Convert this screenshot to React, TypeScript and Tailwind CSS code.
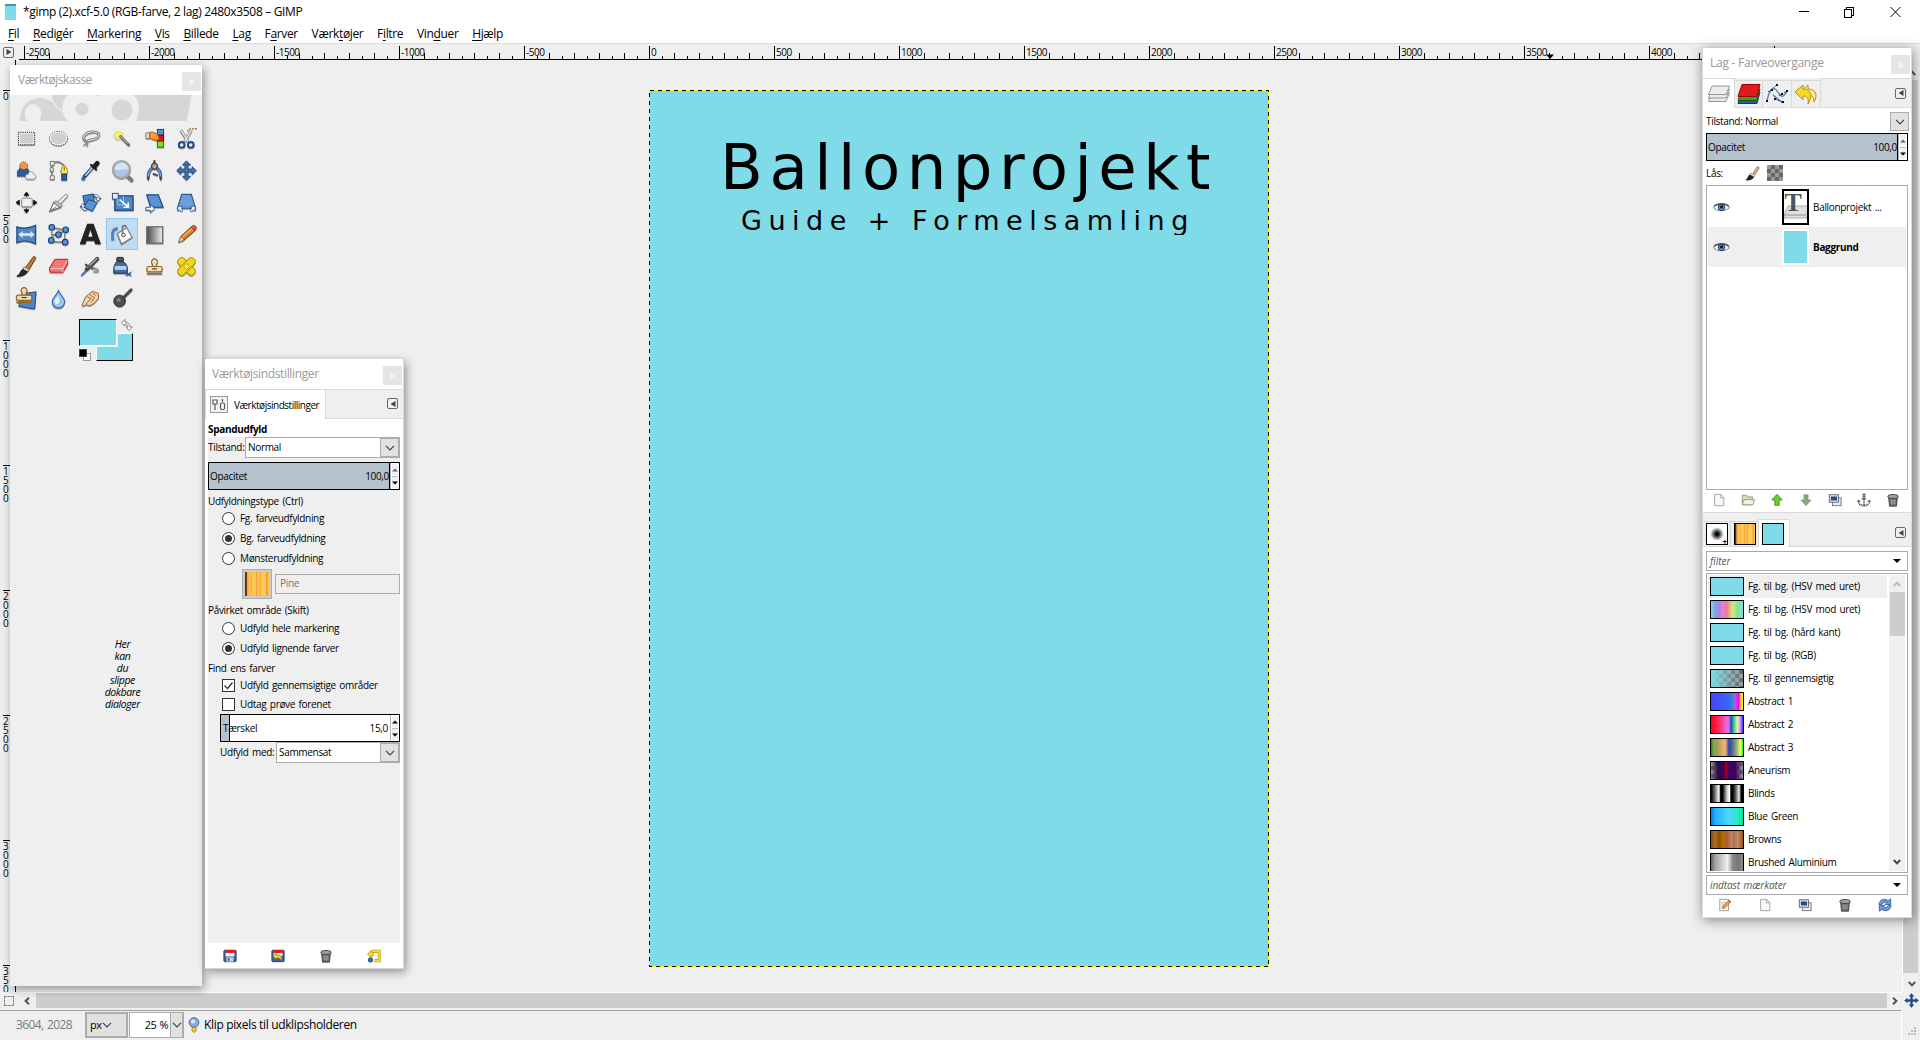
import React from "react";

type Kids = { children?: React.ReactNode };

const stroke = { fill: "none", strokeLinecap: "round", strokeLinejoin: "round" } as const;

/* ---------- tool icons, 24x24 ---------- */

const Stamp = () => (
  <g fill="#f0dcae" stroke="#8f6a2a" strokeWidth="1.2">
    <path d="M9.500 12.500c1.500-2 .5-2.500-.500-4.500a3.100 3.100 0 1 1 6 0c-1 2-2 2.500-.5 4.500z" />
    <rect x="4" y="12" width="16" height="5.500" rx="1.800" />
    <path d="M4 19.500h16" stroke="#8f6a2a" strokeWidth="1.500" />
    <path d="M9.500 14.500h5" stroke="#3a3a3a" />
  </g>
);

const tools: React.ReactNode[] = [
  <g>
    <rect x="4" y="6" width="16" height="12" fill="#cdd0cb" stroke="#fff" strokeWidth="1.4" />
    <rect x="3.500" y="5.500" width="17" height="13" fill="none" stroke="#111" strokeDasharray="1.200 1" />
  </g>,
  <g>
    <ellipse cx="12" cy="12" rx="9" ry="7" fill="#cdd0cb" stroke="#fff" strokeWidth="1.500" />
    <ellipse cx="12" cy="12" rx="9.500" ry="7.400" fill="none" stroke="#333" strokeDasharray="1.200 1.300" />
  </g>,
  <g {...stroke}>
    <path d="M6 14c-3-4 1-8.500 8-9 6-.3 8.500 3 5.500 6-2.500 2-7 2-10.500 3.500" stroke="#777" strokeWidth="2.800" />
    <path d="M6 14c-3-4 1-8.500 8-9 6-.3 8.500 3 5.500 6-2.500 2-7 2-10.500 3.500" stroke="#dcdcdc" strokeWidth="1.100" />
    <path d="M5 13l4 3-4 3M7 14c2 2 3 4 1 6" stroke="#8a8a8a" strokeWidth="1.300" />
  </g>,
  <g>
    <circle cx="8" cy="8" r="5.500" fill="#fdf6a0" opacity=".65" />
    <circle cx="8" cy="8" r="2.800" fill="#fff04e" />
    <path d="M10 10l8.500 8.500" stroke="#6b6b66" strokeWidth="3" strokeLinecap="round" />
    <path d="M10 9.500l8 8" stroke="#d5d5cb" strokeWidth="1" />
  </g>,
  <g>
    <rect x="15" y="2.500" width="6.500" height="6" fill="#5c8fcb" stroke="#1c3f75" />
    <rect x="15" y="8.500" width="6.500" height="6.500" fill="#d8140f" stroke="#6d0202" />
    <rect x="15" y="15" width="6.500" height="6" fill="#7fdc1b" stroke="#347a04" />
    <path d="M3 6h4v6H3z" fill="#d9d9d9" stroke="#888" />
    <path d="M7 5.500c3-1 6 1 8 2l2 5-4 1.500-6-2.500z" fill="#fb9b35" stroke="#c25b04" />
  </g>,
  <g>
    <path d="M6 3l7.500 12M17 3.500l-7 11.500" stroke="#8d8d8d" strokeWidth="3" />
    <path d="M6 3l7.500 12M17 3.500l-7 11.500" stroke="#e9e9e9" strokeWidth="1.300" />
    <path d="M13 4c1-3 3-2.500 10-2.500" fill="none" stroke="#b87a1a" strokeDasharray="2 1" />
    <ellipse cx="7" cy="18.500" rx="3" ry="3" fill="none" stroke="#204a87" strokeWidth="2" />
    <ellipse cx="16.500" cy="18.500" rx="3" ry="3" fill="none" stroke="#204a87" strokeWidth="2" />
  </g>,
  <g>
    <path d="M2.500 18v-5c1-3 4-4 7-4s5 1 5 4v5z" fill="#2c5aa0" stroke="#5a2a72" strokeDasharray="1.500 1" />
    <circle cx="9" cy="7" r="4" fill="#f39a3c" stroke="#8a4a10" strokeDasharray="1.500 1" />
    <path d="M11 19c0-3 2-3 3-3 0-4 5-4 5.500 0 4 1 2 5 0 5h-6c-1.500 0-2.500-.7-2.500-2z" fill="#efefef" stroke="#999" />
  </g>,
  <g>
    <path d="M5 5v14M5 4c8-3 12 1 13 4" fill="none" stroke="#7c7c7c" strokeWidth="1.500" />
    <path d="M3.500 2.500h4v4h-4zM3.500 17.500h4v4h-4zM3.500 9h3v4h-3z" fill="#f4f4f4" stroke="#777" />
    <path d="M18 6c3 3 4 6 3 9h-6c-1-3 0-6 3-9z" fill="#ffe868" stroke="#a88a06" />
    <path d="M18 8v4" stroke="#6b5a00" />
    <rect x="15.500" y="16" width="5" height="6" fill="#2c5f9e" stroke="#163a68" />
  </g>,
  <g {...stroke}>
    <path d="M5.500 18.500L14 9" stroke="#214c86" strokeWidth="3.600" />
    <path d="M7 17l7-8" stroke="#b9d4ee" strokeWidth="1.600" />
    <path d="M12.500 6l5.500 5" stroke="#1c1c1c" strokeWidth="2.200" />
    <path d="M16 8l3-3.500" stroke="#1c1c1c" strokeWidth="5" />
    <circle cx="4.500" cy="20.500" r="2" fill="#2f68b0" stroke="none" />
  </g>,
  <g>
    <path d="M16 17l5.500 5" stroke="#7b7b7b" strokeWidth="4" strokeLinecap="round" />
    <circle cx="11" cy="11" r="8.900" fill="#a9c6e8" stroke="#a4a6a3" strokeWidth="2.200" />
    <path d="M4 11a7 7 0 0 1 14 0c-4-1.500-9 2-14 0z" fill="#d5e5f5" />
  </g>,
  <g {...stroke}>
    <path d="M12 2v3" stroke="#333" strokeWidth="2" />
    <path d="M10 9c-3 2-4.500 6-4.500 10M14 9c3 2 4.500 6 4.500 10" stroke="#3465a4" strokeWidth="3.200" />
    <path d="M10 9c-3 2-4.500 6-4.500 10M14 9c3 2 4.500 6 4.500 10" stroke="#9dbfe4" strokeWidth="1" />
    <circle cx="12" cy="7.500" r="3" fill="#aaa" stroke="#444" strokeWidth="1.400" />
    <path d="M5.500 19v2.500M18.500 19v2.500M11 15.500l4 1.500" stroke="#444" strokeWidth="1.800" />
  </g>,
  <path d="M12 2l4 4h-2.500v4.500H18V8l4 4-4 4v-2.500h-4.500V18H16l-4 4-4-4h2.500v-4.500H6V16l-4-4 4-4v2.500h4.500V6H8z" fill="#3d74b8" stroke="#1b437c" />,
  <g>
    <rect x="7" y="7.500" width="11" height="9" rx="1.500" fill="#f1f1f1" stroke="#888" />
    <path d="M12 1l2.500 3.500h-5zM12 23l2.500-3.500h-5zM1 12l3.500-2.500v5zM23 12l-3.500-2.500v5zM12 2v4M12 18v4M2 12h3M19 12h4" fill="#111" stroke="#111" strokeWidth=".8" />
  </g>,
  <g>
    <path d="M8 14L20 3l2 2-10 11z" fill="#e9ebe8" stroke="#868884" />
    <path d="M3 21l4-9 7 5z" fill="#fafafa" stroke="#6d6d6d" strokeWidth="1.200" />
    <path d="M3 21l7-5M7 12l7 5 2-2-7-5z" fill="#c9cbc8" stroke="#777" />
  </g>,
  <g>
    <path d="M4 5l11-2 1 9-10 2z" fill="#4a83c4" stroke="#1d4781" />
    <path d="M10 9l9 3-5 9-9-4z" fill="#5a92d2" stroke="#1d4781" />
    <path d="M16 4c3-1 5 1 5 4l2-1-3 4-3-4 2 .5c0-1-1-2-3-1.500zM8 20c-3 1-5-1-5-4l-2 1 3-4 3 4-2-.5c0 1 1 2 3 1.500z" fill="#fff" stroke="#1d4781" strokeWidth=".8" />
  </g>,
  <g>
    <rect x="4" y="5" width="19" height="15" fill="#4f86c6" stroke="#1d4781" strokeWidth="1.300" />
    <path d="M1.500 2.500h6v6h-6z" fill="#e4eefa" stroke="#1d4781" />
    <path d="M7 8.500v6h6v-9" fill="none" stroke="#dbe8f7" strokeDasharray="1.500 1" />
    <path d="M9 9l9 7.500M18 12v5h-5" fill="none" stroke="#fff" strokeWidth="1.700" />
  </g>,
  <g>
    <path d="M4 4h12l5 13H8z" fill="#5a92d2" stroke="#1d4781" strokeWidth="1.200" />
    <path d="M3 17h5v-2.500l4.500 4-4.500 4V20H3z" fill="#fff" stroke="#2d5c99" />
  </g>,
  <g>
    <path d="M7 3.500h10L21.500 18h-19z" fill="#6c9fd8" stroke="#2a5a98" strokeWidth="1.200" />
    <path d="M3 16h5l-1.500 1.500L8 20l-1.500 1.500L4.500 19.500 3 21zM21 16h-5l1.500 1.500L16 20l1.500 1.500 2-2L21 21z" fill="#fff" stroke="#2a5a98" strokeWidth=".9" />
  </g>,
  <g>
    <path d="M2 4c6 2 13 1.500 19.500-1.500v19C15 18.500 8 18 2 20.500z" fill="#4d85c5" stroke="#1d4781" strokeWidth="1.200" />
    <path d="M3.500 12L8 8v2.500h8V8l4.500 4-4.500 4v-2.500H8V16z" fill="#dce9f7" stroke="#7da6d4" strokeWidth=".6" />
  </g>,
  <g>
    <path d="M5 4.500l14 3-1 12H5l1-7 6-1M5 4.500V13M12 12l6-4" fill="none" stroke="#8b8b8b" strokeWidth="1.500" />
    <g fill="#5a92d2" stroke="#173e76" strokeWidth="1.100">
      <circle cx="5" cy="4.500" r="2.900" /><circle cx="19.500" cy="7" r="2.900" /><circle cx="12" cy="12" r="2.900" />
      <circle cx="4.500" cy="18" r="2.900" /><circle cx="19" cy="20" r="2.900" />
    </g>
  </g>,
  <text x="12" y="22" textAnchor="middle" fontFamily="DejaVu Sans" fontWeight="bold" fontSize="28" fill="#222" stroke="#222" strokeWidth=".6">A</text>,
  <g>
    <path d="M2 18c-1-8 0-13 5-12" fill="none" stroke="#5a82b8" strokeWidth="3" />
    <path d="M6.500 11l10-6 5.500 10-11 7z" fill="#fbfbfb" stroke="#7d7d7d" strokeWidth="1.200" />
    <path d="M12 12V4c0-2 4-2 4 0" fill="none" stroke="#777" strokeWidth="1.500" />
    <circle cx="13" cy="12.500" r="1.900" fill="#ddd" stroke="#555" />
  </g>,
  <g>
    <defs><linearGradient id="tg"><stop stopColor="#4a4a4a" /><stop offset="1" stopColor="#f0f0f0" /></linearGradient></defs>
    <rect x="4" y="4" width="16.500" height="17" fill="url(#tg)" stroke="#6d6d6d" strokeWidth="1.400" />
  </g>,
  <g>
    <path d="M4 20l2-6L17 4l4 3.500L9 18z" fill="#d9892f" stroke="#7b4208" />
    <path d="M17 4l1.500-1.200c2-1 4.500 1 3.500 3L21 7.500z" fill="#e35b5b" stroke="#a02929" />
    <path d="M4 20l2-6 3.500 4z" fill="#f3dfb4" stroke="#7b6a3a" strokeWidth=".8" />
    <path d="M8 14.500L18 5.500" stroke="#f5c078" />
  </g>,
  <g>
    <path d="M11 13L19 2c1.500-1 3 0 2.500 1.500L14 16z" fill="#c77a32" stroke="#6e3b0d" />
    <path d="M9.500 12.500l5 3-1.500 2-5-2.500z" fill="#e8e8e8" stroke="#777" />
    <path d="M2 22c4-1 2-4 6-7l5 2.500C11 21 6 22.500 2 22z" fill="#2a2a2a" stroke="#111" />
  </g>,
  <g strokeLinejoin="round">
    <path d="M2.500 14l6-9.500h13v5l-5 8.500H3.500z" fill="#f17878" stroke="#d22c2c" strokeWidth="1.200" />
    <path d="M3.500 14h13l5-8.500M16.500 14v4" fill="none" stroke="#ffc3c3" strokeWidth="1" />
  </g>,
  <g {...stroke}>
    <path d="M12 12l7 3c3 2-1 3-3 2" stroke="#9a9a9a" strokeWidth="2" />
    <path d="M8 15L19 4" stroke="#444" strokeWidth="4.200" />
    <path d="M9 13L19 3.500" stroke="#bdbdbd" strokeWidth="1.200" />
    <path d="M7 10l7 4" stroke="#555" strokeWidth="2" />
    <path d="M3 21l4-4" stroke="#3f76bd" strokeWidth="2.200" />
  </g>,
  <g>
    <rect x="6" y="2.500" width="7" height="4" rx="1" fill="#555" stroke="#222" />
    <path d="M6 7h7c4 3 4 5 4 12H3c0-7 0-9 3-12z" fill="#506a8e" stroke="#1c2b42" />
    <rect x="3.500" y="11" width="13" height="5" fill="#b6d0ee" stroke="#3d6ba5" />
    <path d="M15 17l3 2 4-2-2 3 2 2-4-1-3 1 1-2z" fill="#2f5f9f" />
  </g>,
  <Stamp />,
  <g fill="#f2d61c" stroke="#b59a06">
    <rect x="1" y="8" width="22" height="8" rx="3.500" transform="rotate(45 12 12)" />
    <rect x="1" y="8" width="22" height="8" rx="3.500" transform="rotate(-45 12 12)" />
    <path d="M9 12l3-3 3 3-3 3z" fill="#fbec7a" />
  </g>,
  <g>
    <path d="M8 7l14-2-1.500 18L4 20z" fill="#4e86c6" stroke="#1d4781" />
    <g transform="translate(-2.500 -3.500)"><Stamp /></g>
  </g>,
  <g>
    <path d="M12 4c2 5 6.500 7 6.500 11.500a6.500 6.500 0 0 1-13 0C5.500 11 10 9 12 4z" fill="#9cc3ec" stroke="#3668a8" strokeWidth="1.200" />
    <path d="M8 15c0-3 3-4 4-7 0 5 3 6-1 10-2 0-3-1-3-3z" fill="#e3f0fc" />
  </g>,
  <g>
    <path d="M3 19l4-9 7-5.500 6 2 .5 5-4 5-5 3-4-1-3 1.500z" fill="#f2cfae" stroke="#9d633a" />
    <path d="M8 10l5 2-6 6M11 8l5 3-3 5M14 6l4 3" fill="none" stroke="#9d633a" />
  </g>,
  <g>
    <path d="M12 12L21 3" stroke="#4a4d4c" strokeWidth="3" strokeLinecap="round" />
    <circle cx="9" cy="14.500" r="6" fill="#4b4e4d" stroke="#2b2d2c" />
    <circle cx="8" cy="13.500" r="2" fill="#808382" />
  </g>,
];

/* ---------- small 16x16 icons ---------- */

type IconName =
  | "page" | "folder" | "up" | "down" | "dup" | "anchor" | "trash" | "edit" | "reload" | "save" | "restore" | "reset" | "brush" | "eye" | "move";

const small: Record<IconName, React.ReactNode> = {
  page: <path d="M3 1.500h6.500L13.500 5V14.500H3zM9.500 1.500v4h4" fill="#fafafa" stroke="#9a9c98" />,
  folder: (
    <g stroke="#8f9a78">
      <path d="M1.500 13.500v-11h5l1 2H13v9z" fill="#d5dcc0" />
      <path d="M1.500 13.500l2-6h12l-2 6z" fill="#eef0e0" />
    </g>
  ),
  up: <path d="M8 1.500l6 6.500H10.500v6h-5V8H2z" fill="#6fd02a" stroke="#3d8a10" />,
  down: <path d="M8 14.500l6-6.500H10.500V2h-5v6H2z" fill="#86a878" stroke="#6d8a62" strokeDasharray="1 1" />,
  dup: (
    <g>
      <rect x="5" y="5.500" width="10" height="9" fill="#e8e8e8" stroke="#66707c" />
      <rect x="1.500" y="2" width="10.500" height="8.500" fill="#dfe3e8" stroke="#56616e" />
      <rect x="3.300" y="4" width="7" height="4.500" fill="#2b4a7a" />
    </g>
  ),
  anchor: <path d="M8 1.500a1.300 1.300 0 1 1 0 2.600 1.300 1.300 0 0 1 0-2.600zM8 4.500v10M5.500 6.500h5M1 8.500C2 13 5 14.500 8 14.500s6-1.500 7-6M1 8.500l3 1M15 8.500l-3 1" fill="none" stroke="#555" strokeWidth="1.800" strokeDasharray="1.500 .5" />,
  trash: (
    <g stroke="#3a3c3a">
      <path d="M3 4.500h10l-1 10.500H4z" fill="#6d706e" />
      <ellipse cx="8" cy="4" rx="6" ry="2.300" fill="#9b9e9b" />
      <path d="M6 7.500v5M8 7.500v5.500M10 7.500v5" stroke="#b5b8b5" strokeWidth=".8" />
    </g>
  ),
  edit: (
    <g>
      <path d="M2 1.500h10v13H2z" fill="#f5f5f5" stroke="#999" />
      <path d="M4 5h5M4 7h4M4 9h3" stroke="#bbb" />
      <path d="M5 12l1-3 6-6 2 2-6 6z" fill="#f0a33a" stroke="#9a5a10" strokeWidth=".8" />
      <path d="M11.500 3.500l1.500-1.200 1.800 1.800L13.500 5.500z" fill="#e03c3c" />
    </g>
  ),
  reload: (
    <g fill="#6f9bd0" stroke="#2a5596" strokeWidth=".9">
      <path d="M1 7.500C1.500 1.500 8 0 11.500 3L14.500 1v6.500H8l2.200-2.200C8 4 5.500 5 4.500 7.500z" />
      <path d="M15 8.500C14.500 14.500 8 16 4.500 13L1.500 15V8.500H8l-2.200 2.200C8 12 10.500 11 11.500 8.500z" />
    </g>
  ),
  save: (
    <g>
      <rect x="1" y="1.500" width="14" height="13" rx="1" fill="#3a64a0" stroke="#1f3f70" />
      <rect x="3" y="2" width="10" height="6.500" fill="#f5f5f5" />
      <rect x="2.500" y="1" width="11" height="3.500" fill="#e01b1b" />
      <rect x="4" y="9.500" width="8" height="5" fill="#d0d4d8" />
      <rect x="5.500" y="10.500" width="2" height="3" fill="#44546a" />
    </g>
  ),
  restore: (
    <g>
      <rect x="1" y="1.500" width="14" height="13" rx="1" fill="#3a64a0" stroke="#1f3f70" />
      <rect x="3" y="2" width="10" height="6" fill="#f5f5f5" />
      <rect x="2.500" y="1" width="11" height="3.500" fill="#e01b1b" />
      <path d="M2 8l4-3.500V7c5-.5 7 2 6 6.500-1.500-3-3-3.500-6-3.200V12z" fill="#f5d732" stroke="#8a7206" strokeWidth=".8" />
    </g>
  ),
  reset: (
    <g>
      <path d="M5.500 2.500h8.500v11H8.500" fill="none" stroke="#b39206" strokeWidth="3.400" />
      <path d="M4.500 2.500h9.500v11H8.500" fill="none" stroke="#f9dc3a" strokeWidth="2" />
      <path d="M.5 6l4-4.500L8 7H6v2H3V7z" fill="#f9dc3a" stroke="#b39206" strokeWidth=".8" />
      <circle cx="4" cy="12.500" r="2.500" fill="#3c6fb4" stroke="#1d4781" />
    </g>
  ),
  brush: (
    <g>
      <path d="M9 8l4-6c1-.8 2.500.2 2 1.500L11 9.500z" fill="#e0b98a" stroke="#8a5a2a" strokeWidth=".7" />
      <path d="M7 8l4 2.500-1 1.500-4-2.500z" fill="#e8e8e8" stroke="#777" strokeWidth=".6" />
      <path d="M1 15c3-1 2-3 4.500-5.500L10 12c-1 3-6 4-9 3z" fill="#222" />
    </g>
  ),
  eye: (
    <g>
      <path d="M.5 8C3 4.500 12 3.500 15.500 8 12 12 3 12 .5 8z" fill="#fff" stroke="#8a8d8a" />
      <path d="M1 6.800C4 3.800 12 3.500 15 7" fill="none" stroke="#555" strokeWidth="1.200" />
      <circle cx="8" cy="7.800" r="3" fill="#5f86b8" stroke="#2f4d78" />
      <circle cx="8" cy="7.600" r="1.400" fill="#0d1624" />
    </g>
  ),
  move: <path d="M8 .5l2.500 3H9v3.500h3.500V5.500l3 2.500-3 2.500V9H9v3.500h1.500L8 15.500l-2.500-3H7V9H3.500v1.500L.5 8l3-2.500V7H7V3.500H5.500z" fill="#204a87" stroke="#204a87" strokeWidth=".5" />,
};

const Icon = ({ n, className = "size-4" }: { n: IconName; className?: string }) => (
  <svg viewBox="0 0 16 16" className={`shrink-0 ${className}`}>{small[n]}</svg>
);

/* ---------- shared widgets ---------- */

const Chevron = ({ className }: { className: string }) => (
  <svg viewBox="0 0 10 6" className={className}><path d="M1 .8l4 4 4-4" fill="none" stroke="currentColor" strokeWidth="1.200" /></svg>
);

/* Bold arrow head used at the ends of scroll bars */
const ScrollArrow = ({ className }: { className: string }) => (
  <svg viewBox="0 0 8 6" className={`h-[6px] w-2 ${className}`}><path d="M.8 1L4 4.400 7.200 1" fill="none" stroke="currentColor" strokeWidth="2" /></svg>
);

const TitleBar = ({ children, className }: Kids & { className: string }) => (
  <div className="flex h-[30px] shrink-0 items-center justify-between bg-white pr-px text-[12px] text-[#999]">
    <span className={className}>{children}</span>
    <span className="mt-[3px] flex size-[19px] items-center justify-center bg-[#e5e5e5] pb-px text-[10px] font-bold text-[#f7f7f7]">x</span>
  </div>
);

const MenuButton = () => (
  <span className="flex h-[11px] w-[11px] items-center justify-center rounded-[2px] border border-[#666]">
    <svg viewBox="0 0 6 6" className="size-[6px]"><path d="M5.500 0v6L.5 3z" fill="#444" /></svg>
  </span>
);

const Spinner = ({ dim = false }: { dim?: boolean }) => (
  <span className="flex w-[9px] flex-col border-l border-[#b5b5b5] bg-white p-px">
    <span className={`flex flex-1 items-center justify-center bg-[#f0f0f0] ${dim ? "text-[#666]" : "text-black"}`}>
      <svg viewBox="0 0 6 4" className="h-1 w-[6px]"><path d="M0 3.500h6L3 .5z" fill="currentColor" /></svg>
    </span>
    <span className="mt-px flex flex-1 items-center justify-center border-t border-[#bbb] bg-[#f0f0f0]">
      <svg viewBox="0 0 6 4" className="h-1 w-[6px]"><path d="M0 .5h6L3 3.500z" /></svg>
    </span>
  </span>
);

const OpacitySlider = () => (
  <div className="flex h-7 border border-black">
    <div className="flex flex-1 items-center justify-between border-r border-black bg-[#b4c2ce] pl-px">
      <span>Opacitet</span><span>100,0</span>
    </div>
    <Spinner dim />
  </div>
);

const Combo = ({ children }: Kids) => (
  <span className="flex flex-1 items-center border border-[#acacac] bg-white pl-[2px]">
    <span className="flex-1">{children}</span>
    <span className="flex w-[19px] items-center justify-center self-stretch border border-[#acacac] bg-[#e1e1e1] text-[#444]"><Chevron className="h-[6px] w-[10px]" /></span>
  </span>
);

const Radio = ({ on = false, children, className = "" }: Kids & { on?: boolean; className?: string }) => (
  <div className={`ml-[14px] flex items-center gap-[5px] ${className}`}>
    <span className="flex size-[13px] items-center justify-center rounded-full border border-[#333] bg-white">
      {on && <span className="size-[7px] rounded-full bg-[#333]" />}
    </span>
    <span>{children}</span>
  </div>
);

const Check = ({ on = false, children, className = "" }: Kids & { on?: boolean; className?: string }) => (
  <div className={`ml-[14px] flex items-center gap-[5px] ${className}`}>
    <span className="flex size-[13px] items-center justify-center border border-[#333] bg-white">
      {on && <svg viewBox="0 0 11 11" className="size-[11px]"><path d="M1.500 5.500l3 3 5-6" fill="none" stroke="#333" strokeWidth="1.200" /></svg>}
    </span>
    <span>{children}</span>
  </div>
);

const pine = "bg-[linear-gradient(90deg,#5a2d12_0,#5a2d12_6%,#f0a040_8%,#ffc64e_20%,#f9ac45_26%,#ffca55_32%,#ffc64e_44%,#f5a33c_48%,#ffcb58_54%,#f9a843_62%,#ffc850_70%,#ffcd60_84%,#f0a040_90%,#ffc64e_100%)]";
const checker = "bg-[repeating-conic-gradient(#666_0_25%,#999_0_50%)] bg-[length:8px_8px]";

/* ---------- main window ---------- */

const menus: [string, string, string][] = [
  ["", "F", "il"], ["", "R", "edigér"], ["", "M", "arkering"], ["", "V", "is"], ["", "B", "illede"], ["", "L", "ag"],
  ["F", "a", "rver"], ["Værk", "t", "øjer"], ["F", "i", "ltre"], ["Vin", "d", "uer"], ["", "H", "jælp"],
];

const hLabels = ["-2500", "-2000", "-1500", "-1000", "-500", "0", "500", "1000", "1500", "2000", "2500", "3000", "3500", "4000", "4500"];
const vLabels = ["0", "500", "1000", "1500", "2000", "2500", "3000", "350"];

const Ticks = () => (
  <svg className="absolute bottom-0 left-0 h-[13px] w-[125px]" shapeRendering="crispEdges">
    <path d="M.5 0v13M25.500 7v6M50.500 7v6M75.500 7v6M100.500 7v6M13.500 10v3M38.500 10v3M63.500 10v3M88.500 10v3M113.500 10v3" stroke="#000" />
  </svg>
);

const MainWindow = () => (
  <div className="flex h-[1040px] w-[1920px] flex-col">
    <div className="flex h-[22px] items-center bg-white pt-0.5 pl-[5px]">
      <span className="h-4 w-[11px] border-t-2 border-[#4b98a3] bg-[#7edbe7]" />
      <span className="ml-[7px] text-[12px] tracking-[-0.33px]">*gimp (2).xcf-5.0 (RGB-farve, 2 lag) 2480x3508 – GIMP</span>
      <svg viewBox="0 0 102 12" className="mr-[19px] ml-auto h-3 w-[102px]" shapeRendering="crispEdges" fill="none" stroke="#000">
        <path d="M0 5.500h10M45.500 3.500h7v8h-7zM47.500 3v-1.500h7v8h-2" />
        <path d="M91.500 1l10 10M101.500 1l-10 10" shapeRendering="auto" />
      </svg>
    </div>
    <div className="flex h-[22px] items-center gap-[13.700px] border-b border-[#dcdcdc] bg-white pt-0.5 pl-2 text-[12px] tracking-[-0.34px]">
      {menus.map(([a, u, b]) => (
        <span key={a + u + b}>{a}<span className="underline underline-offset-2">{u}</span>{b}</span>
      ))}
    </div>

    <div className="flex h-4 shrink-0">
      <div className="flex w-[19px] items-center pl-[3px]">
        <span className="flex h-[11px] w-[11px] items-center justify-center rounded-[2px] border border-[#666]">
          <svg viewBox="0 0 6 6" className="size-[6px]"><path d="M.5 0v6L5.500 3z" fill="#444" /></svg>
        </span>
      </div>
      <div className="relative flex w-[1883px] overflow-hidden border-b border-black pl-[5px]">
        {hLabels.map((l) => (
          <div key={l} className="relative h-[15px] w-[125px] shrink-0">
            <Ticks />
            <span className="block pt-[2px] pl-[2px] text-[10px] leading-[13px] tracking-[-0.5px]">{l}</span>
          </div>
        ))}
        <svg viewBox="0 0 8 5" className="absolute bottom-0 left-[1527px] h-[5px] w-2"><path d="M0 .5h8L4 5z" /></svg>
      </div>
      <div className="flex-1" />
    </div>

    <div className="flex min-h-0 flex-1">
      <div className="flex w-4 shrink-0 flex-col overflow-hidden border-r border-black pt-[30px] pl-[3px]">
        {vLabels.map((l) => (
          <div key={l} className="flex h-[125px] shrink-0 flex-col border-t border-black pt-px text-[10px] leading-[9px]">
            {l.split("").map((c, i) => <span key={i}>{c}</span>)}
          </div>
        ))}
      </div>
      <div className="flex-1 pt-[30px] pl-[633px]">
        <div className="relative flex h-[877px] w-[620px] flex-col bg-[#7edbe7] font-['DejaVu_Sans'] text-black">
          <svg className="absolute inset-0 h-[877px] w-[620px]" fill="none" shapeRendering="crispEdges">
            <rect x=".5" y=".5" width="619" height="876" stroke="#ff0" />
            <rect x=".5" y=".5" width="619" height="876" stroke="#000" strokeDasharray="4 4" />
          </svg>
          <div className="mt-[41px] pl-[71px] text-[62.500px] leading-[74px] tracking-[6.500px]">Ballonprojekt</div>
          <div className="h-[30px] overflow-hidden pl-[92px] text-[27px] leading-[32px] tracking-[6.500px] whitespace-pre">Guide + Formelsamling</div>
        </div>
      </div>
      <div className="flex w-[18px] flex-col items-center border-l border-white text-[#555]">
        <ScrollArrow className="mt-[10px] rotate-180" />
        <div className="mt-1 h-[893px] w-[15px] self-start bg-[#cdcdcd]" />
        <ScrollArrow className="mt-2" />
      </div>
    </div>

    <div className="flex h-[18px] shrink-0 text-[#555]">
      <span className="mt-[4px] ml-1 size-[10px] border border-dashed border-[#888]" />
      <div className="ml-[5px] flex flex-1 items-center border-t border-white pb-[2px]">
        <ScrollArrow className="mr-[5px] ml-1 rotate-90" />
        <div className="h-[15px] flex-1 bg-[#cdcdcd]" />
        <ScrollArrow className="mx-1 -rotate-90" />
      </div>
      <Icon n="move" className="mt-[1px] mr-px ml-px size-[15px]" />
    </div>

    <div className="flex h-[30px] shrink-0">
      <div className="flex w-[1902px] items-center border-t border-r border-t-[#a0a0a0] border-r-white pb-px pl-[16px] text-[12px]">
        <span className="w-[69px] tracking-[-0.62px] text-[#7a7a7a] [word-spacing:1px]">3604, 2028</span>
        <span className="flex h-[26px] w-[43px] items-center border-2 border-[#acacac] bg-[#e1e1e1] pl-[3px] text-[11px] tracking-[-0.5px]">px<Chevron className="h-[6px] w-[10px] text-[#444]" /></span>
        <span className="ml-px flex h-[26px] w-[55px] border border-[#acacac] bg-white">
          <span className="flex flex-1 items-center justify-end pr-[2px] text-[11px] tracking-[-0.6px] [word-spacing:1px]">25 %</span>
          <span className="flex w-[13px] items-center justify-center border-x border-[#acacac] bg-[#e1e1e1] text-[#444]"><Chevron className="h-[6px] w-[10px]" /></span>
        </span>
        <svg viewBox="0 0 12 16" className="ml-1 h-4 w-3">
          <circle cx="6" cy="5.500" r="4.800" fill="#86addb" stroke="#3d68a3" />
          <circle cx="5" cy="4.500" r="2" fill="#dcebfa" />
          <path d="M4 10.500h4V14l-2 1.500L4 14z" fill="#f4cf30" stroke="#9a7d0a" strokeWidth=".7" />
        </svg>
        <span className="ml-[4px] tracking-[-0.34px]">Klip pixels til udklipsholderen</span>
      </div>
      <svg viewBox="0 0 9 9" className="mt-[17px] ml-[6px] size-[9px]" fill="#bbb">
        <path d="M6 0h2v2H6zM3 3h2v2H3zM6 3h2v2H6zM0 6h2v2H0zM3 6h2v2H3zM6 6h2v2H6z" />
      </svg>
    </div>
  </div>
);

/* ---------- floating windows ---------- */

const Toolbox = () => (
  <div className="absolute top-[65px] left-[10px] flex h-[921px] w-[192px] flex-col bg-[#efefef] shadow-[2px_3px_9px_rgba(0,0,0,0.4)]">
    <TitleBar className="pl-2 tracking-[-0.48px]">Værktøjskasse</TitleBar>
    <svg viewBox="0 0 192 26" className="h-[26px] w-[192px] shrink-0">
      <path d="M41 0h140q-1 14-5 26H46z" fill="#d6d6d6" />
      <path d="M10 26C10 10 20 3 30 3c9 0 16 6 22 14v9z" fill="#d6d6d6" />
      <path d="M41 0q1 10 12 17" fill="none" stroke="#efefef" strokeWidth="1.200" />
      <g fill="#efefef">
        <ellipse cx="23" cy="19" rx="8.300" ry="10" />
        <circle cx="72" cy="13" r="19.500" /><circle cx="107" cy="14" r="22" />
      </g>
      <circle cx="72" cy="14" r="6.500" fill="#d6d6d6" /><circle cx="112" cy="15" r="10.500" fill="#d6d6d6" />
    </svg>
    <div className="mt-px grid grid-cols-[repeat(6,32px)]">
      {tools.map((t, i) => (
        <div key={i} className={`flex size-8 items-center justify-center border ${i === 21 ? "border-[#90c8f6] bg-[#c0dcf3]" : "border-transparent"}`}>
          <svg viewBox="0 0 24 24" className="size-[23px] drop-shadow-[0_1px_0.5px_rgba(0,0,0,0.35)]">{t}</svg>
        </div>
      ))}
    </div>
    <div className="relative mt-[5px] ml-[69px] h-[42px] w-[54px]">
      <span className="absolute right-0 bottom-0 h-[28px] w-[37px] border border-t-white border-r-black border-b-black border-l-white bg-[#7edbe7]" />
      <span className="absolute top-0 left-0 h-[27px] w-[38px] border border-t-black border-r-white border-b-white border-l-black bg-[#7edbe7] outline-1 outline-[#efefef]" />
      <span className="absolute bottom-0 left-1 size-2 border border-[#999] bg-white" />
      <span className="absolute bottom-1 left-0 size-[8px] border border-[#444] bg-black" />
      <svg viewBox="0 0 12 12" className="absolute top-0 right-0 size-3" fill="#fff" stroke="#777" strokeWidth=".9"><path d="M.5 4L4 .5V3c3 0 5 2 5 5h2.500L8 11.500 5 8h2c0-2-1-3-3-3v2z" /></svg>
    </div>
    <p className="mt-[277px] ml-[33px] text-center text-[10.500px] leading-[12px] tracking-[-0.4px] italic">Her<br />kan<br />du<br />slippe<br />dokbare<br />dialoger</p>
  </div>
);

const ToolOptions = () => (
  <div className="absolute top-[359px] left-[205px] flex h-[610px] w-[199px] flex-col border-r border-b border-[#d8d8d8] bg-white text-[10px] tracking-[-0.32px] [word-spacing:1.200px] shadow-[2px_3px_9px_rgba(0,0,0,0.4)]">
    <TitleBar className="pl-[7px] tracking-[-0.36px]">Værktøjsindstillinger</TitleBar>
    <div className="flex h-[30px] shrink-0 bg-[#efefef]">
      <div className="flex w-[121px] items-center border-t border-r border-l border-[#d9d9d9] bg-white pl-1">
        <span className="flex h-[17px] w-[18px] shrink-0 items-center justify-center border border-[#999] bg-[#f2f2f2]">
          <svg viewBox="0 0 14 12" className="h-3 w-[14px]" fill="#fff" stroke="#555" strokeWidth="1.200"><path d="M1 1h4v4H1zM3 5v6M2.500 8h1" /><path d="M10.500 0v3" /><rect x="8.500" y="4" width="4" height="6.500" rx="1.500" /></svg>
        </span>
        <span className="mt-px ml-[6px] tracking-[-0.48px]">Værktøjsindstillinger</span>
      </div>
      <div className="flex flex-1 items-center justify-end border-y border-[#d9d9d9] pr-[5px] pb-px"><MenuButton /></div>
    </div>
    <div className="flex h-[18px] shrink-0 items-end pl-[3px] font-bold"><span className="leading-[15px]">Spandudfyld</span></div>
    <div className="mr-[3px] ml-[3px] flex flex-1 flex-col bg-[#efefef]">
      <div className="flex h-[21px] items-stretch gap-[2px]"><span className="w-[35px] self-center">Tilstand:</span><Combo>Normal</Combo></div>
      <div className="mt-1"><OpacitySlider /></div>
      <div className="mt-1 h-[14px]">Udfyldningstype (Ctrl)</div>
      <Radio className="h-5">Fg. farveudfyldning</Radio>
      <Radio className="h-5" on>Bg. farveudfyldning</Radio>
      <Radio className="h-5">Mønsterudfyldning</Radio>
      <div className="ml-[34px] flex h-[31px] items-center gap-[3px]">
        <span className="flex size-[30px] items-center justify-center border border-[#adadad] bg-[#ccc]"><span className={`size-6 ${pine}`} /></span>
        <span className="flex h-5 flex-1 items-center border border-[#acacac] pl-1 text-[#777]">Pine</span>
      </div>
      <div className="mt-[4px] h-[15px]">Påvirket område (Skift)</div>
      <Radio className="h-5">Udfyld hele markering</Radio>
      <Radio className="h-[21px]" on>Udfyld lignende farver</Radio>
      <div className="mt-[2px] h-[15px]">Find ens farver</div>
      <Check className="h-[19px]" on>Udfyld gennemsigtige områder</Check>
      <Check className="h-[19px]">Udtag prøve forenet</Check>
      <div className="ml-3 flex h-7 border border-black bg-[linear-gradient(90deg,#b4c2ce_8px,#000_8px,#000_9px,#fff_9px)]">
        <div className="flex flex-1 items-center justify-between pr-[2px] pl-[2px]"><span>Tærskel</span><span>15,0</span></div>
        <Spinner />
      </div>
      <div className="ml-3 flex h-[21px] items-stretch gap-[2px]"><span className="w-[54px] self-center whitespace-nowrap">Udfyld med:</span><Combo>Sammensat</Combo></div>
    </div>
    <div className="flex h-[25px] items-center gap-[34px] pl-[18px]">
      <Icon n="save" className="size-[14px]" /><Icon n="restore" className="size-[14px]" /><Icon n="trash" className="size-[14px]" /><Icon n="reset" className="size-[14px]" />
    </div>
  </div>
);

const gradients: [string, string][] = [
  ["Fg. til bg. (HSV med uret)", "bg-[#7edbe7]"],
  ["Fg. til bg. (HSV mod uret)", "bg-[linear-gradient(90deg,#7edbe7,#7fa0e8_14%,#b080e6_26%,#e87fd8_38%,#e87f8a_50%,#e8c87f_62%,#cfe87f_70%,#7fe88a_82%,#7edbe7)]"],
  ["Fg. til bg. (hård kant)", "bg-[#7edbe7]"],
  ["Fg. til bg. (RGB)", "bg-[#7edbe7]"],
  ["Fg. til gennemsigtig", "bg-[linear-gradient(90deg,#7edbe7,#7edbe700),repeating-conic-gradient(#666_0_25%,#999_0_50%)] bg-[length:100%_100%,8px_8px]"],
  ["Abstract 1", "bg-[linear-gradient(90deg,#4444ff,#3a66ff_55%,#2a90c8_66%,#c050f0_76%,#ff00e0_86%,#ffe000_94%,#ffff00)]"],
  ["Abstract 2", "bg-[linear-gradient(90deg,#ff0018,#ff2a60_25%,#e868d8_48%,#d070f0_56%,#2050a8_63%,#30d890_72%,#f0f0a0_82%,#e8a0e8_90%,#3030ff)]"],
  ["Abstract 3", "bg-[linear-gradient(90deg,#109010,#88a050_8%,#a0a050_20%,#e8b068_38%,#f0b070_45%,#3048a8_56%,#4060a0_64%,#98b078_80%,#f0ff60_92%,#00ff20)]"],
  ["Aneurism", "bg-[linear-gradient(90deg,#50505000,#2a0a40_22%,#400060_42%,#b00010_48%,#40005c_54%,#400060_76%,#50505000),repeating-conic-gradient(#666_0_25%,#999_0_50%)] bg-[length:100%_100%,8px_8px]"],
  ["Blinds", "bg-[linear-gradient(90deg,#000,#444_8%,#fff_25%,#000_30%,#000_36%,#ccc_50%,#fff_58%,#000_62%,#000_68%,#666_78%,#eee_88%,#000_94%)]"],
  ["Blue Green", "bg-[linear-gradient(90deg,#0078ff,#2ab0ff_15%,#48d8ff_55%,#30e8d0_80%,#00e890)]"],
  ["Browns", "bg-[linear-gradient(90deg,#8a5020,#b06a20_14%,#905000_26%,#c07000_40%,#a05a30_48%,#c88060_64%,#a87060_72%,#c09060_84%,#9a5020)]"],
  ["Brushed Aluminium", "bg-[linear-gradient(90deg,#606460,#a0a0a0_12%,#d0d0d0_36%,#f0f0f0_52%,#888_68%,#777_85%,#888)]"],
];

const Layers = () => (
  <div className="absolute top-[48px] left-[1702px] flex h-[870px] w-[210px] flex-col border-x border-b border-[#dadada] bg-white text-[10px] tracking-[-0.32px] [word-spacing:1.200px] shadow-[1px_2px_12px_rgba(0,0,0,0.45)]">
    <TitleBar className="pl-[7px] tracking-[-0.25px] [word-spacing:0px]">Lag - Farveovergange</TitleBar>
    <div className="flex h-[30px] shrink-0 items-end bg-[#efefef]">
      <span className="flex h-[30px] w-8 items-center justify-center border-t border-r border-[#d9d9d9] bg-white">
        <svg viewBox="0 0 24 20" className="h-5 w-6" fill="#ececec" stroke="#8b8d8a" strokeWidth=".9"><path d="M5 9h17.500l-3.500 8.500H1.500z" /><path d="M5 5.500h17.500L19 14H1.500z" /><path d="M5 2h17.500L19 10.500H1.500z" /></svg>
      </span>
      <span className="flex h-[28px] w-7 items-center justify-center border-t border-r border-b border-[#d9d9d9]">
        <svg viewBox="0 0 24 22" className="h-[22px] w-6"><path d="M5 9h18l-3 11.500H1z" fill="#2f57a4" stroke="#17346b" /><path d="M5 6h18l-3 11.500H1z" fill="#3f9a26" stroke="#1d5a0d" /><path d="M5 1.500h18l-3 12H1z" fill="#e01b1b" stroke="#900" /></svg>
      </span>
      <span className="flex h-[28px] w-[29px] items-center justify-center border-t border-r border-b border-[#d9d9d9]">
        <svg viewBox="0 0 24 22" className="h-[22px] w-6" fill="none"><path d="M2 18C4 8 8 2 12 8s6 8 10 0M8 12l10 8" stroke="#4a77b8" strokeWidth="1.300" /><path d="M3 9l9-7M14 13l8-5M10 16l7 3" stroke="#333" strokeDasharray="2 1" /><path d="M6 6h2v2H6zM11 1h2v2h-2zM16 10h2v2h-2zM21 7h2v2h-2zM9 15h2v2H9zM17 18h2v2h-2zM1 17h2v2H1z" fill="#111" /></svg>
      </span>
      <span className="flex h-[28px] w-[29px] items-center justify-center border-t border-r border-b border-[#d9d9d9]">
        <svg viewBox="0 0 24 22" className="h-[22px] w-6" stroke="#b8940a"><path d="M7 8l7-6v4c8 0 10 6 6 13 0-5-2-7-6-7v3z" fill="#fbeb8a" /><path d="M1 9l8-7v4c8 0 10 7 5 15 1-6-1-8-5-8v4z" fill="#f8d62c" /></svg>
      </span>
      <span className="flex h-[30px] flex-1 items-center justify-end border-y border-[#d9d9d9] pr-[5px]"><MenuButton /></span>
    </div>

    <div className="flex flex-col px-[3px]">
      <div className="mt-1 flex h-[19px] items-center">
        <span className="w-[39px]">Tilstand:</span><span className="flex-1">Normal</span>
        <span className="-mr-px flex size-[19px] items-center justify-center border border-[#acacac] bg-[#e1e1e1] text-[#444]"><Chevron className="h-[6px] w-[10px]" /></span>
      </div>
      <div className="mt-[2px]"><OpacitySlider /></div>
      <div className="mt-[3px] flex h-[18px] items-center"><span className="w-[38px]">Lås:</span><Icon n="brush" /><span className={`ml-[7px] size-4 ${checker}`} /></div>
      <div className="mt-[3px] flex h-[305px] flex-col border border-[#a8a8ae] p-px">
        <div className="flex h-10 items-center pl-[5px]">
          <Icon n="eye" className="size-[17px]" />
          <span className="ml-[52px] flex h-[36px] w-[27px] items-center justify-center border-2 border-black bg-white">
            <svg viewBox="0 0 23 32" className="h-8 w-[23px]"><path d="M4 15h22l-4 9H0zM0 24h21l2 3H0z" fill="#e0e0e0" stroke="#aaa" /><text x="9" y="20" textAnchor="middle" fontFamily="Liberation Serif" fontWeight="bold" fontSize="26" fill="#4a565c">T</text></svg>
          </span>
          <span className="ml-1">Ballonprojekt ...</span>
        </div>
        <div className="flex h-10 items-center bg-[#efefef] pl-[5px]">
          <Icon n="eye" className="size-[17px]" />
          <span className="ml-[52px] h-[36px] w-[27px] border-2 border-white bg-[#7edbe7]" />
          <span className="ml-1 font-bold">Baggrund</span>
        </div>
      </div>
      <div className="flex h-[22px] items-center gap-[15px] pb-[2px] pl-[6px]">
        <Icon n="page" className="size-[14px]" /><Icon n="folder" className="size-[14px]" /><Icon n="up" className="size-[14px]" /><Icon n="down" className="size-[14px]" />
        <Icon n="dup" className="size-[14px]" /><Icon n="anchor" className="size-[14px]" /><Icon n="trash" className="size-[14px]" />
      </div>
    </div>

    <div className="flex h-[35px] shrink-0 items-end border-t border-[#d9d9d9] bg-[#efefef]">
      <span className="flex h-[26px] w-[28px] items-center border-t border-r border-b border-[#d9d9d9] pl-[3px]">
        <span className="relative size-[22px] border border-black bg-[radial-gradient(circle,#000_8%,#555_22%,#fff_48%)]">
          <span className="absolute right-0 -bottom-0.5 text-[9px] leading-none font-bold text-[#123]">+</span>
        </span>
      </span>
      <span className="flex h-[26px] w-[27px] items-center border-t border-b border-[#d9d9d9] pl-[3px]"><span className={`size-[22px] border border-black ${pine}`} /></span>
      <span className="flex h-[28px] w-[32px] items-start border-t border-r border-l border-[#d9d9d9] bg-white pt-[3px] pl-[3px]"><span className="size-[22px] border border-black bg-[#7edbe7]" /></span>
      <span className="flex h-[28px] flex-1 items-center justify-end border-b border-[#d9d9d9] pr-[5px]"><MenuButton /></span>
    </div>

    <div className="flex flex-1 flex-col px-[3px] pt-[4px]">
      <div className="flex h-5 items-center justify-between border border-[#a8a8ae] pr-[6px] pl-[3px] tracking-[0px] text-[#555] italic">
        filter<svg viewBox="0 0 8 4" className="h-1 w-2"><path d="M0 0h8L4 4z" /></svg>
      </div>
      <div className="mt-[2px] flex h-[300px] border border-[#a8a8ae] p-px">
        <div className="h-[296px] flex-1 overflow-hidden pr-[2px]">
          {gradients.map(([name, bg], i) => (
            <div key={name} className={`flex h-[23px] items-center gap-1 pl-[2px] ${i === 0 ? "bg-[#efefef]" : ""}`}>
              <span className={`h-[19px] w-[34px] border border-black ${bg}`} /><span>{name}</span>
            </div>
          ))}
        </div>
        <div className="mr-px flex w-4 flex-col items-center bg-[#f0f0f0] text-[#bbb]">
          <ScrollArrow className="mt-[6px] rotate-180" />
          <span className="mt-[5px] h-11 w-[15px] bg-[#cdcdcd]" />
          <ScrollArrow className="mt-auto mb-[6px] text-[#444]" />
        </div>
      </div>
      <div className="mt-[2px] flex h-5 items-center justify-between border border-[#a8a8ae] pr-[6px] pl-[3px] tracking-[-0.1px] text-[#555] italic">
        indtast mærkater<svg viewBox="0 0 8 4" className="h-1 w-2"><path d="M0 0h8L4 4z" /></svg>
      </div>
      <div className="flex h-[20px] items-center gap-[26px] pl-3">
        <Icon n="edit" className="size-[14px]" /><Icon n="page" className="size-[14px]" /><Icon n="dup" className="size-[14px]" /><Icon n="trash" className="size-[14px]" /><Icon n="reload" className="size-[14px]" />
      </div>
    </div>
  </div>
);

export default function App() {
  return (
    <div className="relative h-[1040px] w-[1920px] overflow-hidden bg-[#efefef] font-['Open_Sans',sans-serif] text-black">
      <MainWindow />
      <Toolbox />
      <ToolOptions />
      <Layers />
    </div>
  );
}
